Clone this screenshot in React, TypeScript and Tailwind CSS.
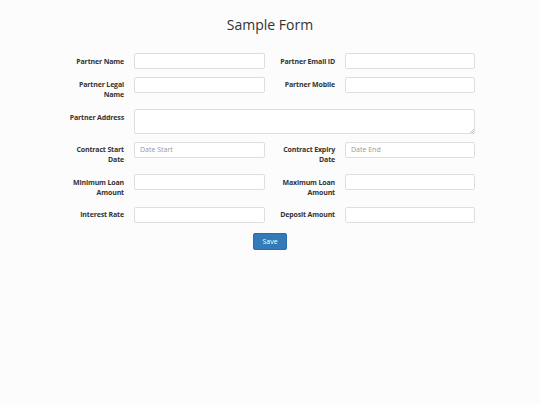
function Label({ text }: { text: string }) {
  return (
    <label className="w-[64px] shrink-0 pt-[3.5px] pb-[1.5px] text-right text-[7px] leading-[10px] font-bold tracking-[-0.15px] text-[#333]">
      {text}
    </label>
  );
}

function Input({ placeholder, wide }: { placeholder?: string; wide?: boolean }) {
  return (
    <input
      type="text"
      placeholder={placeholder}
      className={
        "ml-[10px] h-[16px] rounded-[2px] border border-[#dedede] bg-white px-[5px] text-[7px] text-[#555] outline-none placeholder:text-[#999] " +
        (wide ? "w-[131px]" : "w-[130px]")
      }
    />
  );
}

function Row({ children }: { children: React.ReactNode }) {
  return <div className="mb-[7.5px] flex items-start">{children}</div>;
}

function Half({ label, placeholder, right }: { label: string; placeholder?: string; right?: boolean }) {
  return (
    <div className={"flex items-start " + (right ? "ml-[6px]" : "")}>
      <Label text={label} />
      <Input placeholder={placeholder} wide={!right} />
    </div>
  );
}

export default function App() {
  return (
    <div className="flex min-h-[405px] w-[540px] flex-col bg-[#fcfcfc] pt-[15px] font-['Open_Sans',sans-serif]">
      <h1 className="text-center text-[14px] leading-[20px] font-normal text-[#333]">Sample Form</h1>
      <form className="ml-[60px] mt-[18px] flex w-[420px] flex-col">
        <Row>
          <Half label="Partner Name" />
          <Half label="Partner Email ID" right />
        </Row>
        <Row>
          <Half label="Partner Legal Name" />
          <Half label="Partner Mobile" right />
        </Row>
        <Row>
          <Label text="Partner Address" />
          <div className="relative ml-[10px]">
            <textarea className="block h-[25px] w-[341px] resize-none rounded-[2px] border border-[#dedede] bg-white px-[5px] text-[7px] outline-none" />
            <svg className="pointer-events-none absolute right-[1px] bottom-[1px]" width="5" height="5" viewBox="0 0 5 5">
              <path d="M1 5 L5 1 M3 5 L5 3" stroke="#999" strokeWidth="0.6" />
            </svg>
          </div>
        </Row>
        <Row>
          <Half label="Contract Start Date" placeholder="Date Start" />
          <Half label="Contract Expiry Date" placeholder="Date End" right />
        </Row>
        <Row>
          <Half label="Minimum Loan Amount" />
          <Half label="Maximum Loan Amount" right />
        </Row>
        <Row>
          <Half label="Interest Rate" />
          <Half label="Deposit Amount" right />
        </Row>
      </form>
      <div className="mt-[3px] flex justify-center">
        <button
          type="button"
          className="h-[17px] w-[34px] rounded-[2px] border border-[#2e6da4] bg-[#337ab7] text-[7px] leading-[15px] text-white"
        >
          Save
        </button>
      </div>
    </div>
  );
}
